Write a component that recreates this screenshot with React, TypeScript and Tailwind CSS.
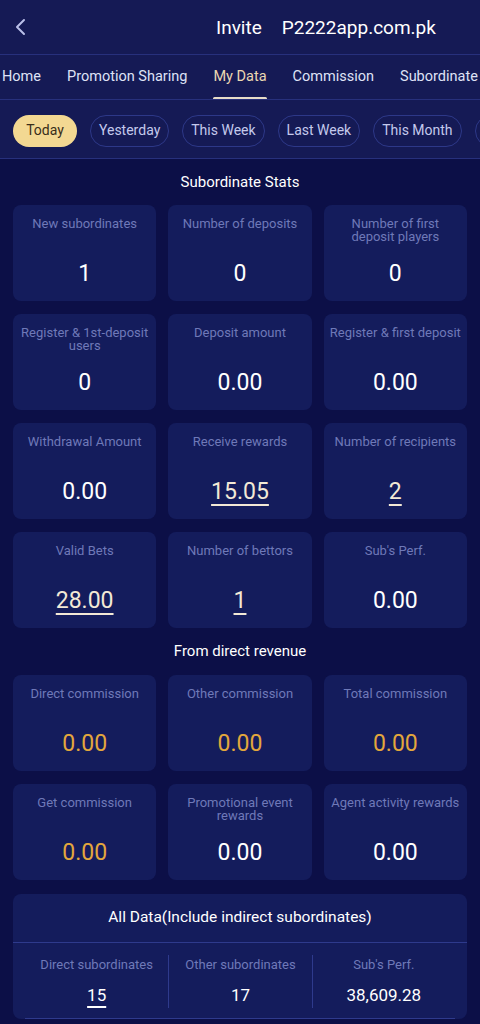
import React from "react";

type Cell = { label: string; value: string; u?: boolean; orange?: boolean };

const stats: Cell[] = [
  { label: "New subordinates", value: "1" },
  { label: "Number of deposits", value: "0" },
  { label: "Number of first deposit players", value: "0" },
  { label: "Register & 1st-deposit users", value: "0" },
  { label: "Deposit amount", value: "0.00" },
  { label: "Register & first deposit", value: "0.00" },
  { label: "Withdrawal Amount", value: "0.00" },
  { label: "Receive rewards", value: "15.05", u: true },
  { label: "Number of recipients", value: "2", u: true },
  { label: "Valid Bets", value: "28.00", u: true },
  { label: "Number of bettors", value: "1", u: true },
  { label: "Sub's Perf.", value: "0.00" },
];

const revenue: Cell[] = [
  { label: "Direct commission", value: "0.00", orange: true },
  { label: "Other commission", value: "0.00", orange: true },
  { label: "Total commission", value: "0.00", orange: true },
  { label: "Get commission", value: "0.00", orange: true },
  { label: "Promotional event rewards", value: "0.00" },
  { label: "Agent activity rewards", value: "0.00" },
];

function Card({ c }: { c: Cell }) {
  return (
    <div className="h-[96px] rounded-[8px] bg-[#141c5c] flex flex-col items-center px-[6px] pt-[12px]">
      <div className="h-[34px] text-[13px] leading-[13px] text-[#6f79b8] text-center">{c.label}</div>
      <div
        className={
          "mt-[9px] text-[23px] leading-[28px] " +
          (c.orange ? "text-[#e3a73c]" : c.u ? "text-[#f3e9d6] underline decoration-[2px] underline-offset-[5px]" : "text-white")
        }
      >
        {c.value}
      </div>
    </div>
  );
}

export default function App() {
  const tabs = ["Home", "Promotion Sharing", "My Data", "Commission", "Subordinate"];
  const pills = ["Today", "Yesterday", "This Week", "Last Week", "This Month", "Last Month"];
  return (
    <div className="w-[480px] h-[1024px] overflow-hidden bg-[#0c0f47] text-white" style={{ fontFamily: 'Roboto, "Noto Sans", sans-serif' }}>
      <div className="bg-[#151a55]">
        <div className="h-[55px] flex items-center relative border-b border-[#27307c]">
          <svg className="absolute left-[14px] top-[17px]" width="14" height="20" viewBox="0 0 14 20" fill="none">
            <path d="M10 3 L3 10 L10 17" stroke="#b9bfe8" strokeWidth="2" strokeLinecap="round" strokeLinejoin="round" />
          </svg>
          <div className="pl-[216px] flex items-center gap-[20px] text-[19px] leading-none">
            <span>Invite</span>
            <span>P2222app.com.pk</span>
          </div>
        </div>
        <div className="h-[45px] flex items-center whitespace-nowrap border-b border-[#27307c] relative overflow-hidden">
          <div className="flex gap-[26px] pl-[2px] text-[14.5px] text-[#dfe2f5]">
            {tabs.map((t) => (
              <div key={t} className="relative">
                <span className={t === "My Data" ? "text-[#ead8b2]" : ""}>{t}</span>
                {t === "My Data" && <div className="absolute left-0 right-0 top-[31px] h-[3px] rounded bg-[#e6dcc8]" />}
              </div>
            ))}
          </div>
        </div>
        <div className="h-[59px] flex items-center gap-[13px] pl-[13px] pt-[3px] whitespace-nowrap border-b border-[#27307c] overflow-hidden">
          {pills.map((p, i) => (
            <div
              key={p}
              className={
                "h-[32px] rounded-full flex items-center justify-center text-[14px] shrink-0 " +
                (i === 0 ? "w-[64px] bg-[#f3d892] text-[#3a2e1a]" : "px-[8px] border border-[#2d3888] text-[#c4c9ec]")
              }
            >
              {p}
            </div>
          ))}
        </div>
      </div>

      <div className="px-[13px]">
        <div className="h-[46px] flex items-center justify-center text-[15px]">Subordinate Stats</div>
        <div className="grid grid-cols-3 gap-x-[12px] gap-y-[13px]">
          {stats.map((c) => (
            <Card key={c.label} c={c} />
          ))}
        </div>
        <div className="h-[47px] flex items-center justify-center text-[15px]">From direct revenue</div>
        <div className="grid grid-cols-3 gap-x-[12px] gap-y-[13px]">
          {revenue.map((c) => (
            <Card key={c.label} c={c} />
          ))}
        </div>
        <div className="mt-[14px] rounded-[8px] bg-[#141c5c]">
          <div className="h-[49px] flex items-center justify-center text-[15.5px] border-b border-[#2e3a8c]">
            All Data(Include indirect subordinates)
          </div>
          <div className="grid grid-cols-3 pt-[12px] pb-[10px] border-b border-[#2e3a8c] mx-[12px]">
            {[
              { l: "Direct subordinates", v: "15", u: true },
              { l: "Other subordinates", v: "17" },
              { l: "Sub's Perf.", v: "38,609.28" },
            ].map((c, i) => (
              <div key={c.l} className={"flex flex-col items-center " + (i > 0 ? "border-l border-[#2e3a8c]" : "")}>
                <div className="text-[13px] text-[#6f79b8]">{c.l}</div>
                <div className={"mt-[8px] text-[17px] " + (c.u ? "underline decoration-[2px] underline-offset-[5px]" : "")}>{c.v}</div>
              </div>
            ))}
          </div>
        </div>
      </div>
    </div>
  );
}
